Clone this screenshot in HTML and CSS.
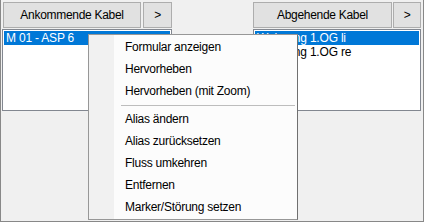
FILE: index.html
```html
<!DOCTYPE html>
<html lang="de">
<head>
    <meta charset="UTF-8">
    <title>Kabel</title>
    <link rel="stylesheet" href="styles.css">
</head>
<body>
    <div class="window">
        <div class="panels">
            <div class="panel left">
                <div class="buttons">
                    <button class="btn wide">Ankommende Kabel</button>
                    <button class="btn small">&gt;</button>
                </div>
                <div class="listbox">
                    <div class="item selected">M 01 - ASP 6</div>
                </div>
            </div>
            <div class="panel right">
                <div class="buttons">
                    <button class="btn wide">Abgehende Kabel</button>
                    <button class="btn small">&gt;</button>
                </div>
                <div class="listbox">
                    <div class="item selected">Wohnung 1.OG li</div>
                    <div class="item">Wohnung 1.OG re</div>
                </div>
            </div>
        </div>

        <div class="menu">
            <div class="menu-item">Formular anzeigen</div>
            <div class="menu-item">Hervorheben</div>
            <div class="menu-item">Hervorheben (mit Zoom)</div>
            <div class="menu-sep"></div>
            <div class="menu-item">Alias ändern</div>
            <div class="menu-item">Alias zurücksetzen</div>
            <div class="menu-item">Fluss umkehren</div>
            <div class="menu-item">Entfernen</div>
            <div class="menu-item">Marker/Störung setzen</div>
        </div>
    </div>
</body>
</html>
```

FILE: styles.css
```css
body {
    margin: 0;
    font-family: "Liberation Sans", Arial, sans-serif;
    font-size: 12px;
    color: black;
    background: white;
}

.window {
    position: relative;
    width: 422px;
    height: 221px;
    background: #f0f0f0;
    border: 1px solid #888;
    border-top: none;
    overflow: hidden;
}

.panels {
    display: flex;
    justify-content: space-between;
    padding: 2px 2px 0 1px;
}

.panel {
    display: flex;
    flex-direction: column;
    gap: 1px;
}

.panel.left {
    width: 170px;
}

.panel.right {
    width: 168px;
}

.buttons {
    display: flex;
    justify-content: space-between;
    padding-left: 1px;
}

.right .buttons {
    padding-left: 0;
}

.btn {
    height: 26px;
    background: #e1e1e1;
    border: 1px solid #adadad;
    font-family: inherit;
    font-size: 12px;
    letter-spacing: -0.3px;
    color: black;
    padding: 0;
}

.btn.wide {
    width: 138px;
}

.btn.small {
    width: 29px;
}

.right .btn.wide {
    width: 139px;
}

.right .btn.small {
    width: 28px;
}

.listbox {
    height: 78px;
    background: white;
    border: 1px solid #828790;
    padding: 1px;
}

.item {
    height: 14px;
    line-height: 14px;
    padding-left: 2px;
    white-space: nowrap;
    letter-spacing: -0.2px;
}

.item.selected {
    background: #0078d7;
    color: white;
}

/* context menu over the lists */
.menu {
    position: absolute;
    left: 87px;
    top: 34px;
    width: 204px;
    padding: 1px 2px;
    background: #fcfcfc;
    background-image: linear-gradient(to right, #f1f1f1 0, #f1f1f1 25px, transparent 25px);
    border: 1px solid #979797;
    border-right-color: #707070;
}

.menu-item {
    height: 22px;
    line-height: 22px;
    padding-left: 34px;
    white-space: nowrap;
    letter-spacing: -0.25px;
}

.menu-sep {
    height: 6px;
    margin-left: 30px;
    background: linear-gradient(#bdbdbd, #bdbdbd) center / 100% 1px no-repeat;
}
```
